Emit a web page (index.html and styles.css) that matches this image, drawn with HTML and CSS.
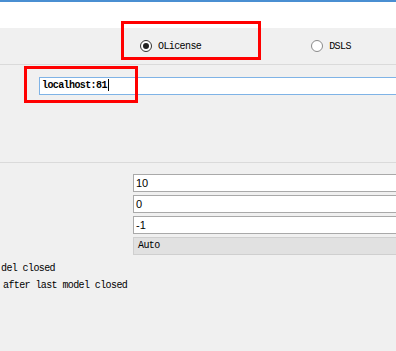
FILE: index.html
```html
<!DOCTYPE html>
<html lang="en">
<head>
    <meta charset="UTF-8">
    <meta name="viewport" content="width=device-width, initial-scale=1.0">
    <title>License Settings</title>
    <link rel="stylesheet" href="styles.css">
</head>
<body>
    <div class="topbar"></div>

    <div class="mode-row">
        <label class="radio radio-olicense"><span class="dot checked"></span>OLicense</label>
        <label class="radio radio-dsls"><span class="dot"></span>DSLS</label>
    </div>

    <div class="host-row">
        <div class="host-input">localhost:81<span class="caret"></span></div>
    </div>

    <div class="params">
        <div class="field">10</div>
        <div class="field">0</div>
        <div class="field">-1</div>
        <div class="field select">Auto</div>

        <div class="options">
            <p>del closed</p>
            <p class="indent">after last model closed</p>
        </div>
    </div>

    <!-- annotation boxes drawn over the dialog -->
    <div class="mark mark-license"></div>
    <div class="mark mark-host"></div>
</body>
</html>
```

FILE: styles.css
```css
body { margin: 0; background-color: #f0f0f0; font-family: "Liberation Mono", monospace; font-size: 10px; letter-spacing: -0.6px; color: #000; overflow: hidden; position: relative; height: 351px; }
.topbar { height: 26px; background-color: #fff; border-top: 2px solid #4a8fd2; }
.mode-row { height: 36px; display: flex; align-items: center; border-bottom: 1px solid #dadada; }
.radio { display: flex; align-items: center; gap: 6px; }
.radio-olicense { margin-left: 140px; }
.radio-dsls { margin-left: 110px; }
.dot { width: 10px; height: 10px; border: 1px solid #8a8a8a; border-radius: 50%; background-color: #fff; position: relative; }
.dot.checked { border-color: #333; }
.dot.checked::after { content: ""; position: absolute; left: 2px; top: 2px; width: 6px; height: 6px; border-radius: 50%; background-color: #222; }
.host-row { height: 85px; padding-top: 12px; padding-left: 39px; border-bottom: 1px solid #dadada; }
.host-input { height: 16px; line-height: 16px; padding-left: 2px; border: 1px solid #7fb3e6; border-right: none; background-color: #fff; font-weight: bold; }
.caret { display: inline-block; width: 1px; height: 12px; background-color: #000; vertical-align: middle; margin-left: 1px; }
.params { padding-top: 11px; }
.field { margin-left: 133px; height: 16px; line-height: 16px; padding-left: 2px; margin-bottom: 3px; border: 1px solid #a9a9a9; border-right: none; background-color: #fff; font-family: "Liberation Sans", sans-serif; font-size: 11px; letter-spacing: 0; }
.field.select { background-color: #e1e1e1; border-color: #cfcfcf; font-family: "Liberation Mono", monospace; font-size: 10px; letter-spacing: -0.6px; padding-left: 4px; }
.options { margin-top: 5px; }
.options p { margin: 0; height: 17px; line-height: 17px; padding-left: 1px; }
.options .indent { padding-left: 3px; }
.mark { position: absolute; border: 3px solid #ff0000; }
.mark-license { left: 121px; top: 21px; width: 134px; height: 33px; }
.mark-host { left: 24px; top: 66px; width: 108px; height: 31px; }
```
